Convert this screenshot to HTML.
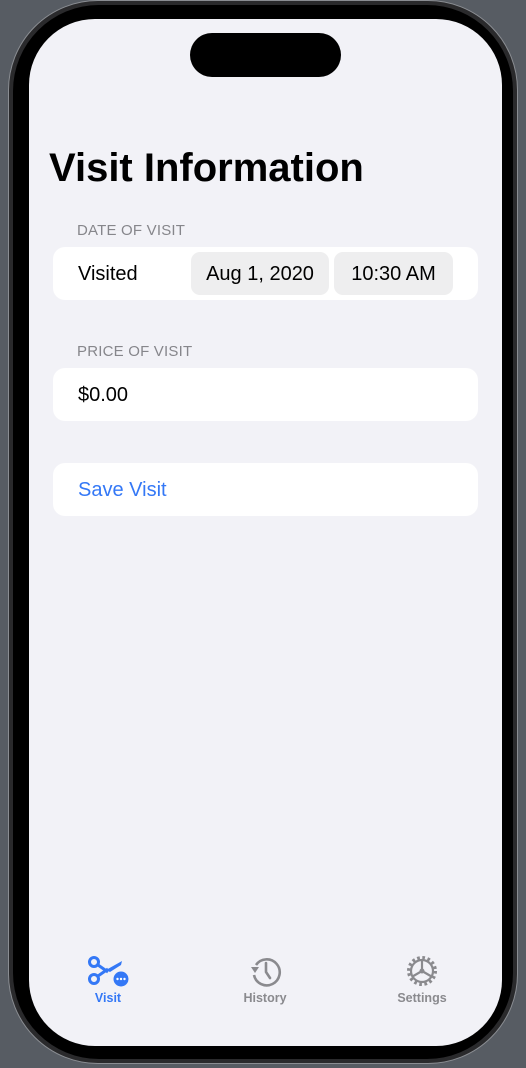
<!DOCTYPE html>
<html><head><meta charset="utf-8"><style>
*{margin:0;padding:0;box-sizing:border-box}
body{width:526px;height:1068px;background:#575c63;position:relative;overflow:hidden;font-family:"Liberation Sans",sans-serif}
.outer{position:absolute;left:8px;top:0;width:510px;height:1064px;border-radius:90px;background:#2a2a2c;border:1px solid #8a8d92}
.bezel{position:absolute;left:13px;top:5px;width:500px;height:1054px;border-radius:86px;background:#000}
.screen{position:absolute;left:29px;top:19px;width:473px;height:1027px;border-radius:66px;background:#f2f2f7;overflow:hidden}
.island{position:absolute;left:161px;top:14px;width:151px;height:44px;border-radius:22px;background:#000}
h1{position:absolute;left:20px;top:127px;font-size:40px;font-weight:bold;color:#000;letter-spacing:0}
.hdr{position:absolute;left:48px;font-size:15px;color:#86868b;letter-spacing:0.2px}
.card{position:absolute;left:24px;width:425px;height:53px;background:#fff;border-radius:12px;font-size:20px}
.card span{position:absolute;top:16px;left:25px}
.pill{position:absolute;top:5px;height:43px;background:#eeeeef;border-radius:9px;font-size:20px;line-height:45px;text-align:center}
.tab{position:absolute;top:936px;width:100px;text-align:center;font-size:12.5px;color:#8a8a8e}
.tab svg{display:block;margin:0 auto 4px}
</style></head><body>
<div class="outer"></div><div class="bezel"></div>
<div class="screen">
<div class="island"></div>
<h1>Visit Information</h1>
<div class="hdr" style="top:203px">DATE OF VISIT</div>
<div class="card" style="top:228px"><span>Visited</span>
<div class="pill" style="left:138px;width:138px">Aug 1, 2020</div>
<div class="pill" style="left:281px;width:119px">10:30 AM</div></div>
<div class="hdr" style="top:324px">PRICE OF VISIT</div>
<div class="card" style="top:349px"><span>$0.00</span></div>
<div class="card" style="top:444px"><span style="color:#3478f6">Save Visit</span></div>

<div class="tab" style="left:29px;color:#3478f6;font-weight:bold">
<svg width="44" height="32" viewBox="0 0 44 32"><g fill="none" stroke="#3478f6" stroke-width="3"><circle cx="8" cy="7" r="4.5"/><circle cx="8" cy="24" r="4.5"/><path d="M12 10 L22 17 M12 21 L22 14"/></g><path d="M20 15 L36 6 L35 10 L24 17Z" fill="#3478f6"/><circle cx="35" cy="24" r="7.5" fill="#3478f6"/><g fill="#fff"><circle cx="31.5" cy="24" r="1.2"/><circle cx="35" cy="24" r="1.2"/><circle cx="38.5" cy="24" r="1.2"/></g></svg>Visit</div>
<div class="tab" style="left:186px;font-weight:bold">
<svg width="34" height="32" viewBox="0 0 34 32"><path d="M8 10 A13 13 0 1 1 6 20" fill="none" stroke="#8a8a8e" stroke-width="2.6"/><path d="M3 12 L11 12 L7 18Z" fill="#8a8a8e"/><path d="M18 8 V17 L22 23" fill="none" stroke="#8a8a8e" stroke-width="2.6" stroke-linecap="round"/></svg>History</div>
<div class="tab" style="left:343px;font-weight:bold">
<svg width="34" height="32" viewBox="0 0 34 32"><circle cx="17" cy="16" r="13" fill="none" stroke="#8a8a8e" stroke-width="4" stroke-dasharray="2.6 2.5"/><circle cx="17" cy="16" r="11" fill="none" stroke="#8a8a8e" stroke-width="2.2"/><path d="M17 16 L17 5 M17 16 L26.5 21.5 M17 16 L7.5 21.5" stroke="#8a8a8e" stroke-width="2.2"/><circle cx="17" cy="16" r="2.5" fill="#8a8a8e"/></svg>Settings</div>
</div>
</body></html>
